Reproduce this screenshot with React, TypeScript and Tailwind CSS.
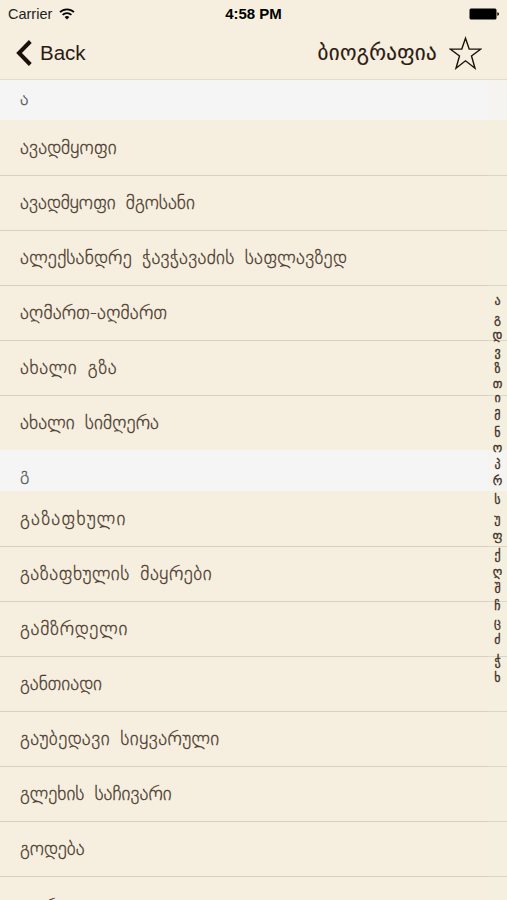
import React from "react";

interface Poem {
  title: string;
  text: string;
}

interface Section {
  letter: string;
  heading: string;
  poems: Poem[];
}

const sections: Section[] = [
  {
    letter: "ა",
    heading: "h-10 pb-1",
    poems: [
      {title: "ავადმყოფი", text: "tracking-[0.1px]"},
      {title: "ავადმყოფი მგოსანი", text: "tracking-normal"},
      {title: "ალექსანდრე ჭავჭავაძის საფლავზედ", text: "tracking-[0.24px]"},
      {title: "აღმართ-აღმართ", text: "tracking-[0.2px]"},
      {title: "ახალი გზა", text: "tracking-[0.6px]"},
      {title: "ახალი სიმღერა", text: "tracking-[0.1px]"},
    ],
  },
  {
    letter: "გ",
    heading: "h-[41px] pt-1.5",
    poems: [
      {title: "გაზაფხული", text: "tracking-[1.2px]"},
      {title: "გაზაფხულის მაყრები", text: "tracking-[0.5px]"},
      {title: "გამზრდელი", text: "tracking-[0.75px]"},
      {title: "განთიადი", text: "tracking-normal"},
      {title: "გაუბედავი სიყვარული", text: "tracking-[0.4px]"},
      {title: "გლეხის საჩივარი", text: "tracking-normal"},
      {title: "გოდება", text: "tracking-normal"},
      {title: "გორი", text: "tracking-normal pt-1.5"},
    ],
  },
];

const indexLetters = "აგდვზთიმნოპრსუფქღშჩცძჭხ".split("");
const indexHeights = [
  18, 18, 16, 17, 17, 15, 14, 18, 17, 15, 17, 16, 19, 19, 17, 19, 17, 17, 17,
  17, 17, 21, 17,
];

const StatusBar: React.FC = () => (
  <div className="h-[27px] px-2 flex items-center justify-between text-black">
    <div className="w-[180px] flex items-center gap-[7px]">
      <span className="pt-0.5 text-[14.5px] text-[#222]">Carrier</span>
      <svg className="w-4 h-3" viewBox="0 0 16 12" fill="none" stroke="#000" strokeWidth="1.8">
        <path d="M1 4.2a10 10 0 0 1 14 0" />
        <path d="M3.6 6.9a6.2 6.2 0 0 1 8.8 0" />
        <path d="M8 11.6 5.6 9.1a3.5 3.5 0 0 1 4.8 0z" fill="#000" stroke="none" />
      </svg>
    </div>
    <span className="pt-0.5 text-[15px] font-bold">4:58 PM</span>
    <div className="w-[180px] flex justify-end">
      <svg className="w-[30px] h-3" viewBox="0 0 30 12">
        <rect x="0.5" y="0.5" width="27" height="11" rx="1.5" />
        <path d="M28.3 4.2q1.7 0.3 1.7 1.8t-1.7 1.8z" />
      </svg>
    </div>
  </div>
);

const NavBar: React.FC = () => (
  <div className="h-[51px] pl-4 pr-[25px] flex items-center justify-between text-[#2b1a12]">
    <button type="button" className="flex items-center gap-2">
      <svg className="w-4 h-[26px]" viewBox="0 0 16 26" fill="none" stroke="#1d0f0a" strokeWidth="4">
        <path d="M14.3 1.5 3 13l11.3 11.5" />
      </svg>
      <span className="pt-px text-[20.5px]">Back</span>
    </button>
    <div className="flex items-center gap-3">
      <span className="pt-0.5 text-[21px] tracking-[0.3px] [-webkit-text-stroke:0.2px] font-['DejaVu_Sans',sans-serif]">
        ბიოგრაფია
      </span>
      <svg className="w-[33px] h-[34px]" viewBox="0 0 33 34" fill="none" stroke="#1d0f0a" strokeWidth="1.4">
        <path d="M16.5 2.2 20.2 13.1H31.8L22.5 20 26 32.2 16.5 24.8 7 32.2 10.5 20 1.2 13.1H12.8z" />
      </svg>
    </div>
  </div>
);

const App: React.FC = () => {
  return (
    <div className="relative h-[900px] w-[507px] overflow-hidden bg-[#f6efdf] font-['Liberation_Sans',sans-serif]">
      <header className="h-20 border-b border-[#e2dbcf]">
        <StatusBar />
        <NavBar />
      </header>

      <main className="font-['DejaVu_Sans_Light','DejaVu_Sans',sans-serif] font-extralight text-[#4a3a2e] [-webkit-text-stroke:0.3px]">
        {sections.map((section) => (
          <section key={section.letter}>
            <h2 className={`pl-5 flex items-center bg-[#f5f5f5] text-[18px] text-[#555] ${section.heading}`}>
              {section.letter}
            </h2>
            <ul className="pt-px">
              {section.poems.map((poem) => (
                <li
                  key={poem.title}
                  className="h-[55px] pl-5 pb-[2px] flex items-center border-b border-[#d8cfc0] last:border-b-0 last:h-[54px]"
                >
                  <span className={`whitespace-nowrap text-[19px] [word-spacing:4px] ${poem.text}`}>
                    {poem.title}
                  </span>
                </li>
              ))}
            </ul>
          </section>
        ))}
      </main>

      {/* Quick index over the list */}
      <nav className="absolute top-20 bottom-0 right-0 w-[19px] pt-[212px] flex flex-col bg-[#f6efdf]/20 text-[12px] text-[#3f3027] [-webkit-text-stroke:0.3px] font-['DejaVu_Sans',sans-serif]">
        {indexLetters.map((letter, i) => (
          <a
            key={letter}
            className="flex items-end justify-center leading-[17px]"
            style={{height: indexHeights[i]}}
          >
            {letter}
          </a>
        ))}
      </nav>
    </div>
  );
};

export default App;
